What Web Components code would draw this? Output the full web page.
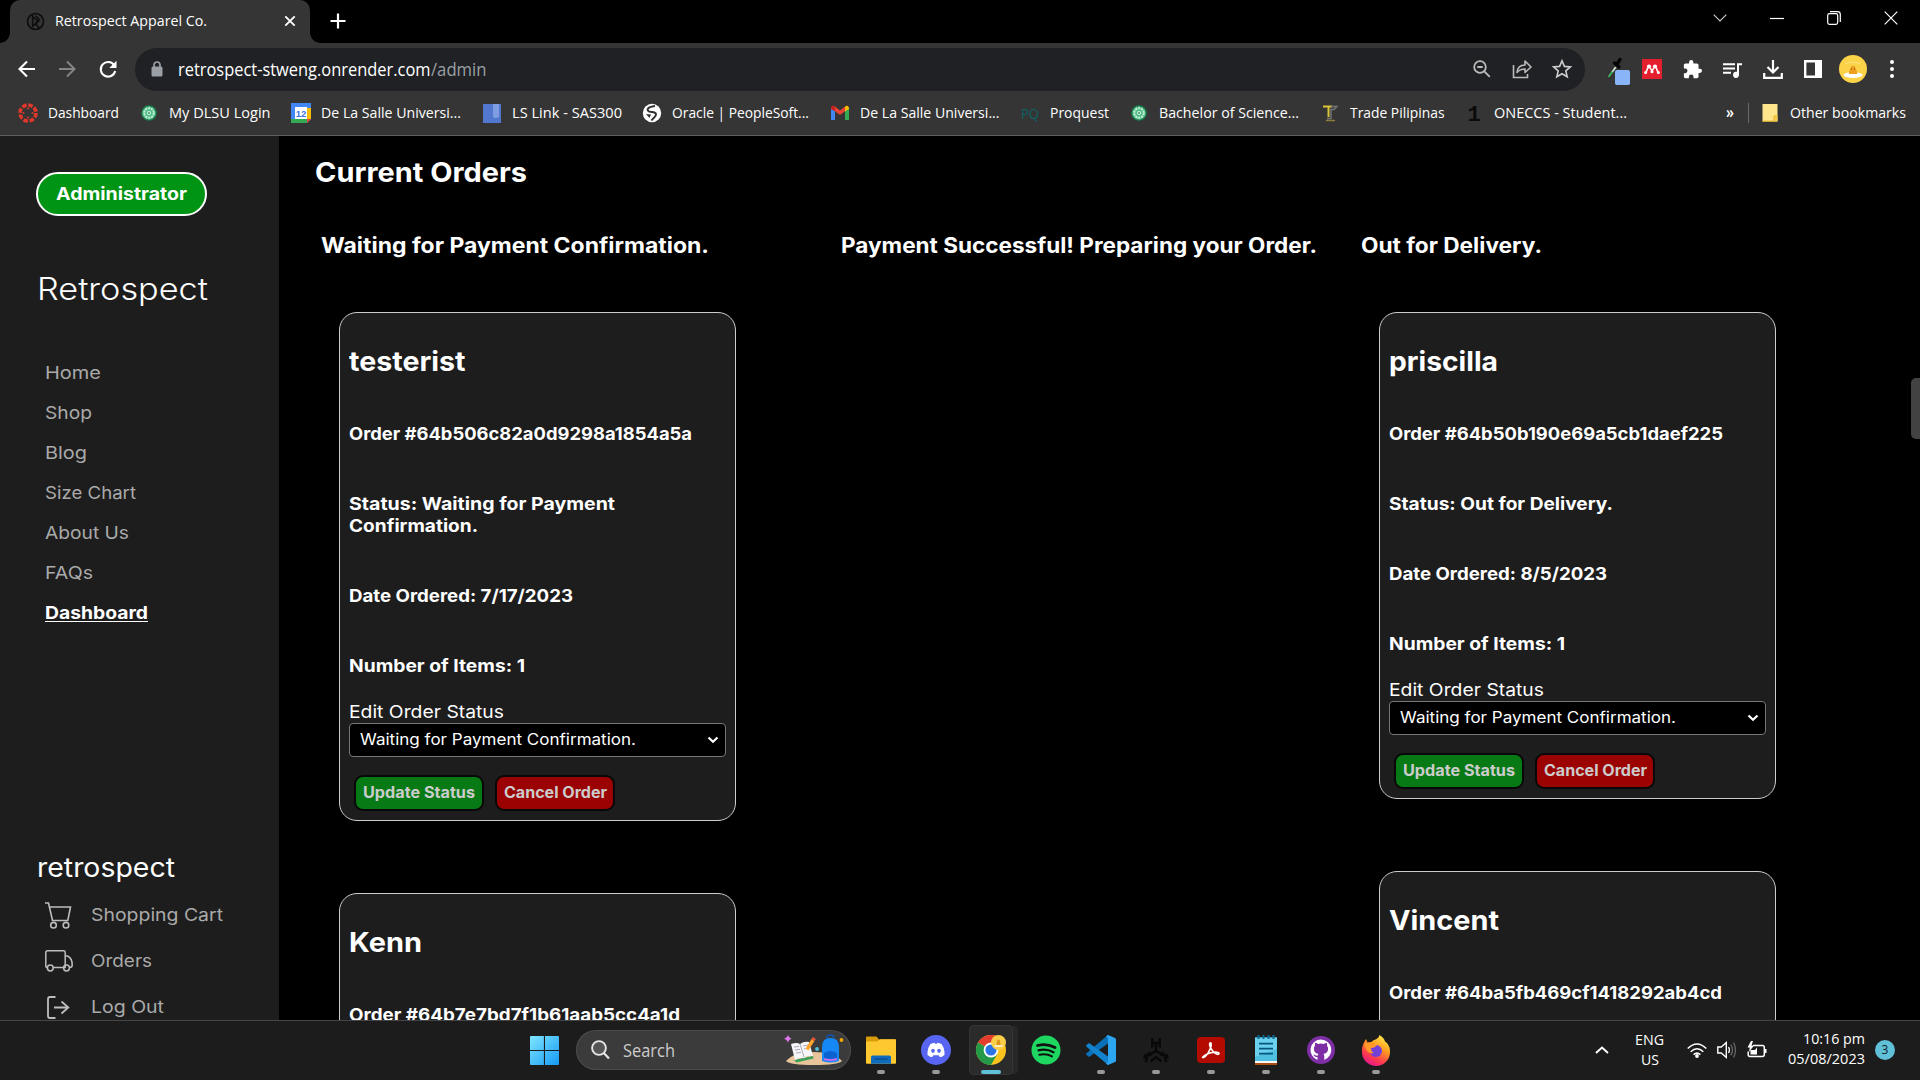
<!DOCTYPE html>
<html lang="en">
<head>
<meta charset="utf-8">
<title>Retrospect Apparel Co.</title>
<style>
html,body{margin:0;height:100%;background:#000;overflow:hidden}
body{font-family:Inter,"Liberation Sans",sans-serif;color:#fff}
</style>
</head>
<body>
<desktop-screen></desktop-screen>
<script>
const SEGOE = '"Open Sans","Noto Sans",sans-serif';
const define = (name, html, init) => customElements.define(name, class extends HTMLElement {
  connectedCallback() {
    if (this.shadowRoot) return;
    const t = document.createElement('template');
    t.innerHTML = typeof html === 'function' ? html(this) : html;
    this.attachShadow({mode: 'open'}).appendChild(t.content.cloneNode(true));
    if (init) init(this);
  }
});

const ICONS = {
  brand: ['0 0 20 20', '<g fill="none" stroke="#0c0c0c" stroke-width="1.7"><circle cx="10" cy="10" r="8.4"/><path d="M7 3v13M7 5l6 5-6 5M10 4l4 4-4 4 4 5"/></g>'],
  close: ['0 0 12 12', '<path d="M1.3 1.3l9.4 9.4M10.7 1.3L1.3 10.7" stroke="#fff" stroke-width="1.9" fill="none"/>'],
  plus: ['0 0 16 16', '<path d="M8 .5v15M.5 8h15" stroke="#fff" stroke-width="2.2"/>'],
  chev: ['0 0 14 8', '<path d="M.7.7L7 7 13.3.7" stroke="#ccc" stroke-width="1.1" fill="none"/>'],
  min: ['0 0 14 14', '<path d="M0 7.500h14" stroke="#fff" stroke-width="1.2"/>'],
  restore: ['0 0 14 14', '<g fill="none" stroke="#fff" stroke-width="1.2"><rect x=".7" y="2.700" width="10" height="10.600" rx="1.800"/><path d="M3 .7h7.500a2.800 2.800 0 0 1 2.800 2.800v7.500"/></g>'],
  winclose: ['0 0 14 14', '<path d="M.7.7l12.600 12.600M13.300.7L.7 13.300" stroke="#fff" stroke-width="1.200"/>'],
  back: ['0 0 18 18', '<path d="M17 9H2M9 1.500L1.500 9 9 16.500" fill="none" stroke="#fff" stroke-width="2.100"/>'],
  fwd: ['0 0 18 18', '<path d="M1 9h15M9 1.500L16.500 9 9 16.500" fill="none" stroke="#858585" stroke-width="2"/>'],
  reload: ['0 0 18 18', '<path d="M15.200 5.300A7.300 7.300 0 1 0 16.200 11" fill="none" stroke="#fff" stroke-width="2.100"/><path d="M17.500.8v7.200h-7.200z" fill="#fff"/>'],
  lock: ['0 0 12 16', '<rect x=".5" y="5.500" width="11" height="10" rx="1.500" fill="#9aa0a6"/><path d="M3 6V4a3 3 0 0 1 6 0v2" fill="none" stroke="#9aa0a6" stroke-width="1.700"/>'],
  zoomout: ['0 0 18 18', '<g fill="none" stroke="#bbb" stroke-width="1.800"><circle cx="7" cy="7" r="5.800"/><path d="M11.300 11.300l5.500 5.500M4.300 7h5.400"/></g>'],
  share: ['0 0 20 20', '<g fill="none" stroke="#bbb" stroke-width="1.600"><path d="M1.500 6v12.500h14V15"/><path d="M5 13.500c.5-5 3.500-7.500 8-7.500V2l6 6-6 5.500V10c-4 0-6 1-8 3.500z" stroke-linejoin="round"/></g>'],
  star: ['0 0 20 20', '<path d="M10 1.800l2.400 5.600 6 .5-4.600 4 1.400 5.900L10 14.700l-5.200 3.100 1.400-5.900-4.600-4 6-.5z" fill="none" stroke="#ccc" stroke-width="1.600"/>'],
  dropper: ['0 0 24 30', '<path d="M2 19L9 9l2 1.500L4.500 19 2 21z" fill="#d7e8d9" stroke="#222" stroke-width=".7"/><path d="M2 20l3.500-5.500 1.500.5-3.500 5z" fill="#20b048"/><path d="M8.500 6l4.500 4M10.500 8L14 2.500" stroke="#050505" stroke-width="3.300" stroke-linecap="round"/><rect x="9" y="13" width="15" height="15" rx="1.800" fill="#8ab4f8"/>'],
  mendeley: ['0 0 20 20', '<rect width="20" height="20" fill="#e5202e"/><g fill="#fff"><circle cx="7" cy="7.600" r="2.100"/><circle cx="13" cy="7.600" r="2.100"/><circle cx="3.600" cy="13.500" r="1.500"/><circle cx="10" cy="12.800" r="1.500"/><circle cx="16.400" cy="13.500" r="1.500"/></g><path d="M3.600 13.300Q5 12.500 5.600 9M8.400 9l1.600 3.500L11.600 9M14.400 9q.6 3.500 2 4.300" fill="none" stroke="#fff" stroke-width="1.500"/>'],
  puzzle: ['1 1 22 22', '<path fill="#fff" d="M20.500 11H19V7c0-1.100-.9-2-2-2h-4V3.500a2.500 2.500 0 0 0-5 0V5H4c-1.100 0-2 .9-2 2v3.800h1.500a2.700 2.700 0 0 1 0 5.400H2V20c0 1.100.9 2 2 2h3.800v-1.500a2.700 2.700 0 0 1 5.400 0V22H17c1.100 0 2-.9 2-2v-4h1.500a2.500 2.500 0 0 0 0-5z"/>'],
  queue: ['2 4 20 16', '<path fill="#fff" d="M15 6H3v2h12V6zm0 4H3v2h12v-2zM3 16h8v-2H3v2zM17 6v8.200a3 3 0 1 0 2 2.800V8h3V6h-5z"/>'],
  download: ['0 0 20 20', '<path d="M10 1v12M4.500 8l5.500 5.500L15.500 8M1.200 14v4.800h17.600V14" fill="none" stroke="#fff" stroke-width="2.200"/>'],
  panel: ['0 0 18 18', '<path d="M1.200 1.200h15.600v15.600H1.200z" fill="none" stroke="#fff" stroke-width="2.400"/><path d="M11 1h6v16h-6z" fill="#fff"/>'],
  avatar: ['0 0 28 28', '<circle cx="14" cy="14" r="14" fill="#fbd348"/><path d="M7 8.500q7-2.500 14 0" stroke="#fff2b8" fill="none" stroke-dasharray="1.500 1"/><ellipse cx="14" cy="20" rx="9.500" ry="3" fill="#fff"/><path d="M10 19c-.5-3 1-4 1.500-6 .8-3 4.500-3 5 0 .5 2 2 3 1.800 6z" fill="#f0a020"/><path d="M12 14h1M15 14h1" stroke="#803c00"/>'],
  dots: ['0 0 4 18', '<g fill="#fff"><circle cx="2" cy="2" r="2"/><circle cx="2" cy="9" r="2"/><circle cx="2" cy="16" r="2"/></g>'],
  canvas: ['0 0 20 20', '<circle cx="10" cy="10" r="8" fill="none" stroke="#e2372b" stroke-width="3.600" stroke-dasharray="4.600 1.683"/><g fill="#e2372b"><circle cx="10" cy="5.500" r="1"/><circle cx="10" cy="14.500" r="1"/><circle cx="5.500" cy="10" r="1"/><circle cx="14.500" cy="10" r="1"/></g>'],
  dlsu: ['0 0 20 20', '<circle cx="10" cy="10" r="7.200" fill="#4fbb86" stroke="#167848" stroke-width="1.500" stroke-dasharray="2.500 1"/><circle cx="10" cy="10" r="4.800" fill="none" stroke="#c2eed6" stroke-width="2" stroke-dasharray="2.200 .8"/><circle cx="10" cy="10" r="2" fill="#d6f5e4"/><circle cx="10" cy="10" r=".9" fill="#2b8a5a"/>'],
  gcal: ['0 0 20 20', '<path d="M0 0h20v16l-4 4H0z" fill="#4285f4"/><path d="M16 5h4v11h-4z" fill="#fbbc04"/><path d="M0 16h16v4H0z" fill="#34a853"/><path d="M16 16h4l-4 4z" fill="#ea4335"/><path d="M4 4h12v12H4z" fill="#fff"/><text x="10" y="13.500" font-family="Liberation Sans" font-weight="700" font-size="9.500" text-anchor="middle" fill="#3a74e0">12</text>'],
  lslink: ['0 0 20 20', '<path d="M1 1h18v19H1z" fill="#5277cf"/><path d="M11 1h6v13q-4 2-6 0z" fill="#7f9de2"/>'],
  oracle: ['0 0 20 20', '<circle cx="10" cy="10" r="9.200" fill="#fff"/><path d="M13 3C8 3.500 4.500 5.500 6 7.700s7.500.3 8 3.300-3 3.500-4.500 6.500" fill="none" stroke="#303030" stroke-width="2"/><path d="M4 11l5 .5-1.500 3.500z" fill="#303030"/>'],
  gmail: ['0 0 20 20', '<path d="M1 5v12h4V8z" fill="#4285f4"/><path d="M19 5v12h-4V8z" fill="#34a853"/><path d="M1 5.500V4.500q1.500-3 4-1l5 4 5-4v4.800L10 12 5 8.300z" fill="#ea4335"/><path d="M1 5q0-2.500 2.500-2.200L5 4v4.300L1 6z" fill="#c5221f"/><path d="M15 3.800q2.500-2.500 4 .7V6l-4 2.600z" fill="#fbbc04"/>'],
  pq: ['0 0 20 20', '<text x="10" y="15.500" font-family="Open Sans" font-size="15" text-anchor="middle" textLength="18" lengthAdjust="spacingAndGlyphs" fill="#0b6468">PQ</text>'],
  trade: ['0 0 20 20', '<path d="M3 3.500h9M8.500 4v10" stroke="#d8c438" stroke-width="2" fill="none"/><path d="M11 3.500h6l-3 3h-3v9H7" stroke="#777" stroke-width="1.400" fill="none"/><path d="M6 17.500h9" stroke="#8d7c3a" stroke-width="1.500"/>'],
  one: ['0 0 20 20', '<text x="10" y="18" font-family="Liberation Mono" font-weight="700" font-size="22" text-anchor="middle" fill="#0b0b0b">1</text>'],
  folder: ['0 0 16 18', '<path d="M.5 0h15v17.500H.5z" fill="#ffe58c"/><path d="M12 11.500h3.500v6H12z" fill="#f6cf51"/><path d="M.5 17.200h11.500v-5h3.500" stroke="#e8b520" fill="none"/>'],
  cart: ['0 0 26 27', '<g fill="none" stroke="#bdbdbd" stroke-width="1.600"><path d="M0 1h3.500l4 17.500h15.300L25.500 5H4.400"/><circle cx="8.500" cy="23.200" r="2.800"/><circle cx="21" cy="23.200" r="2.800"/></g>'],
  truck: ['0 0 28 22', '<g fill="none" stroke="#bdbdbd" stroke-width="1.500"><path d="M2.500 17.500Q.8 17.500.8 16V2.500Q.8.8 2.500.8h16q1.700 0 1.700 1.700v15H8M20 6h2.500Q27.200 8 27.200 15q0 2.500-2.500 2.500"/><circle cx="5.300" cy="18" r="2.900"/><circle cx="21.500" cy="18" r="2.900"/></g>'],
  logout: ['0 0 23 23', '<path d="M8.500 1H3Q1 1 1 3v17q0 2 2 2h5.500M7 11.500h14.500M14.500 5.500l6.800 6-6.800 6" fill="none" stroke="#bdbdbd" stroke-width="1.800"/>'],
  select: ['0 0 12 8', '<path d="M1.500 1.500L6 5.800l4.500-4.300" fill="none" stroke="#fff" stroke-width="2.200"/>'],
  windows: ['0 0 29 29', '<defs><linearGradient id="g" x2="1" y2="1"><stop stop-color="#7fe6ff"/><stop offset="1" stop-color="#159af4"/></linearGradient></defs><path d="M0 1q0-1 1-1h12.900v14H0zM15 0h13q1 0 1 1v13H15zM0 15h13.900v14H1q-1 0-1-1zM15 15h14v13q0 1-1 1H15z" fill="url(#g)"/>'],
  search: ['0 0 19 20', '<circle cx="8" cy="8" r="6.900" fill="#555" stroke="#e5e5e5" stroke-width="1.900"/><path d="M12.800 13l5.200 5.500" stroke="#e5e5e5" stroke-width="2.200"/>'],
  school: ['0 0 60 30', '<path d="M2 26q8-9 28-9t28 9q-4 4-28 4T2 26z" fill="#e9c49a"/><path d="M4 0q.6 3 3.500 3.800Q4.600 4.500 4 7.500 3 4.500.2 3.800 3.200 3 4 0z" fill="#e078f0"/><circle cx="57.500" cy="5" r="1.900" fill="#f3a800"/><circle cx="33" cy="14" r="1.900" fill="#4fc3d8"/><path d="M10 25l19-4 .5 2.500-17 4z" fill="#3aa05a"/><path d="M7 9q6-2 9 0 4-3 9-2l4 14q-6-1-9 2-4-1-9 2z" fill="#f6f6fa"/><path d="M16 9l4 13M10 12l5-.6M11 15l5-.6M12 18l5-.6M19 11l5-1M20 14l5-1" stroke="#a9a9b8" fill="none"/><path d="M23 14.500l6-9.500" stroke="#ffa52c" stroke-width="3.400"/><path d="M29 5l1.300-2" stroke="#f4523c" stroke-width="3.600"/><path d="M38 26V12q0-9 8.500-9T55 12v14q-8 3-17 0z" fill="#1588f5"/><path d="M43 3q0-3 3.500-3T50 3" stroke="#0d55b0" fill="none" stroke-width="1.600"/><path d="M40 18q6-4 13 0v6q-6 2-13 0z" fill="#0b62d0"/><path d="M40 24q6 2 13 0" stroke="#c46cf0" stroke-width="2" fill="none"/>'],
  explorer: ['0 0 30 28', '<path d="M0 1.500Q0 .5 1 .5h9.500l2.500 3H30V14H0z" fill="#d99b08"/><path d="M0 5.500h11l3-2.300h15q1 0 1 1V27q0 .8-1 .8H1q-1 0-1-.8z" fill="#fdc92f"/><path d="M5 27.800V21q0-1.500 1.500-1.500h17Q25 19.500 25 21v6.800z" fill="#0f6cbd"/><path d="M8.500 23h13" stroke="#0a4a86" stroke-width="1.300"/>'],
  discord: ['0 0 30 30', '<circle cx="15" cy="15" r="15" fill="#5865f2"/><path d="M9.500 9q2-1 4-1.200l.5 1h2l.5-1q2 .2 4 1.200 3.500 5 3 11-2 1.700-4.500 2.200l-1.300-2h-5.400l-1.300 2Q8.500 21.700 6.500 20q-.5-6 3-11z" fill="#fff"/><ellipse cx="12" cy="15.800" rx="1.800" ry="2.100" fill="#5865f2"/><ellipse cx="18" cy="15.800" rx="1.800" ry="2.100" fill="#5865f2"/>'],
  chrome: ['0 0 30 30', '<circle cx="15" cy="15" r="15" fill="#fcc31e"/><path d="M15 15L2 7.500A15 15 0 0 1 28 7.500H15z" fill="#e33b2e"/><path d="M2 7.500A15 15 0 0 0 15 30l6.500-11.300L15 15z" fill="#249a49"/><circle cx="15" cy="15" r="7.400" fill="#fff"/><circle cx="15" cy="15" r="5.600" fill="#2b74e8"/><circle cx="22.500" cy="7.500" r="7.500" fill="#fbce47"/><path d="M20.500 10.500q0-6 2-6t2 6z" fill="#dd941a"/><path d="M18.500 11h8" stroke="#fff6d0" stroke-width="1.700"/>'],
  spotify: ['0 0 30 30', '<circle cx="15" cy="15" r="14.500" fill="#1ed760"/><g fill="none" stroke="#111" stroke-linecap="round"><path d="M6.500 10.500q9-2.500 17.500 2" stroke-width="2.800"/><path d="M7.500 15.300q8-2 15 1.900" stroke-width="2.300"/><path d="M8.300 19.800q7-1.600 12.700 1.600" stroke-width="1.900"/></g>'],
  vscode: ['0 0 30 30', '<path d="M22 0v8.500L3 22l-2.500-2q-.7-.8 0-1.700z" fill="#0a70b8"/><path d="M22 30v-8.500L3 8 .5 10q-.7.800 0 1.700z" fill="#1283cc"/><path d="M22 0l7 3q1 .5 1 1.500v21q0 1-1 1.500l-7 3-2-1.500 2-1.500V3l-2-1.500z" fill="#2da6f2"/>'],
  tool: ['0 0 30 26', '<g fill="none" stroke="#080808" stroke-width="2.400"><path d="M11.200 1v9.500M18.800 1v9.500M11.200 6h7.600M15 6v8.500M15 14L2.500 21M15 14l12.500 7M7.500 15l1.500 3-6 .5M4.500 25l2-5M22.500 15L21 18l6 .5M25.500 25l-2-5M9.500 24.500L15 20l5.500 4.500"/></g>'],
  acrobat: ['0 0 28 26', '<rect width="28" height="26" rx="4" fill="#b30b00"/><path d="M6.500 20.500c3-1 6.500-7 7.500-11 .6-3-.3-4.500-1-3.500-1.500 2.500 2.500 9.500 6.500 11 2.500 1 3.500-.8 1.500-1.600-3-1-9 .5-12.500 2.600-2.500 1.500-4 3-2 2.500z" fill="none" stroke="#fff" stroke-width="1.600"/>'],
  notepad: ['0 0 22 30', '<path d="M0 2.500h22V29H0z" fill="#4fbfe0"/><path d="M0 2.500h22V14L0 22z" fill="#6bd0ec"/><path d="M0 26h22v2H0z" fill="#f5f5f5"/><path d="M0 28h22v2H0z" fill="#a74c12"/><path d="M4 8.700h14M4 13.700h14M4 18.700h14" stroke="#05557f" stroke-width="1.700"/><path d="M3.500 0v4M8.500 0v4M13.500 0v4M18.500 0v4" stroke="#0b6a96" stroke-width="2"/>'],
  github: ['0 0 30 30', '<circle cx="15" cy="15" r="14" fill="#7f2fa5"/><path d="M15 5.500a9.700 9.700 0 0 0-3.200 18.800c.7.100.9-.3.900-.7v-2.200c-2.900.6-3.500-1.200-4.300-2.100 2 .2 2 1.500 4.400 1 .1-.6.500-1 .8-1.300-3.600-.8-4.800-2.900-4.800-5.300 0-1.200.4-2.200 1.100-3-.1-.7-.2-1.800.2-2.800 1 0 2 .5 2.800 1.100a9 9 0 0 1 4.300 0c.8-.6 1.900-1.100 2.800-1.100.4 1 .3 2.100.2 2.800.7.800 1.100 1.800 1.100 3 0 2.400-1.200 4.500-4.800 5.300.5.400.8 1.200.8 2.100v2.500c0 .4.200.8.900.7A9.700 9.700 0 0 0 15 5.500z" fill="#7f2fa5"/><path d="M15 4.500a10.500 10.500 0 0 0-3.500 20.400v-3c-3 .5-3.600-1.300-4.200-2.300 2 0 2.300 1.700 4.400 1 .1-.7.500-1.200.9-1.500-3.400-.8-4.700-2.700-4.700-5.400 0-1.200.4-2.200 1.100-3-.2-.8-.2-2 .3-3 1 .1 2 .6 2.800 1.200a10 10 0 0 1 5.800 0c.8-.6 1.800-1.100 2.800-1.200.5 1 .5 2.200.3 3 .7.800 1.100 1.800 1.100 3 0 2.700-1.300 4.600-4.700 5.400.6.500.9 1.300.9 2.300v3.500A10.500 10.500 0 0 0 15 4.500z" fill="#fff"/>'],
  firefox: ['0 0 30 30', '<defs><linearGradient id="f" x1=".8" x2=".3" y2="1"><stop stop-color="#fff44f"/><stop offset=".4" stop-color="#ff9a1f"/><stop offset=".75" stop-color="#ff3850"/><stop offset="1" stop-color="#e01890"/></linearGradient></defs><path d="M18.500 0c3 2 5 4 5.500 6.500 3 2 5.500 6 5 11A14 14 0 0 1 1 16.500C.8 11 3 7.500 5 4l1.500 3.500 4-.5C13 4 17.500 5 18.500 0z" fill="url(#f)"/><circle cx="15" cy="16" r="6" fill="#7340d8"/><path d="M3 9q6-3 9 0l4 1q-2 3-6 3 0 4 3 5-6 1-8-4z" fill="#ff9a2a"/>'],
  caret: ['0 0 14 8', '<path d="M1 7l6-5.500L13 7" fill="none" stroke="#fff" stroke-width="1.900"/>'],
  wifi: ['0 0 20 15', '<g fill="none" stroke="#fff" stroke-width="1.500"><path d="M.7 5.500q9.300-9 18.600 0M3.700 8.700q6.300-6 12.600 0M6.600 11.600q3.400-3 6.800 0"/></g><circle cx="10" cy="13" r="1.900" fill="#fff"/>'],
  sound: ['0 0 20 18', '<path d="M.8 6h3.500l5-4.500v15L4.300 12H.8z" fill="none" stroke="#fff" stroke-width="1.400"/><path d="M11.500 6q2 3 0 6" fill="none" stroke="#fff" stroke-width="1.300"/><path d="M13.800 3.700q3.500 5.300 0 10.600M16.500 1.500q4 7.500 0 15" fill="none" stroke="#666" stroke-width="1.300"/>'],
  battery: ['0 0 20 18', '<path d="M6 4.500h9.500Q17.300 4.500 17.300 6.500v7q0 2-1.800 2H3q-1.800 0-1.800-2v-3" fill="none" stroke="#fff" stroke-width="1.500"/><path d="M18 8h1.500v4H18zM3.500 9H8l2-2.500v7h-6.500zM4 0L.5 6.500h2.300L2 11l5-6.500H4.500L6 0z" fill="#fff"/>']
};

define('ui-icon', el => {
  const [box, art] = ICONS[el.getAttribute('name')];
  const [w, h] = box.split(' ').slice(2);
  const W = el.getAttribute('w') || w, H = el.getAttribute('h') || h;
  return `<style>:host{display:block;flex:none;width:${W}px;height:${H}px}svg{display:block;overflow:visible}</style>
  <svg width="${W}" height="${H}" viewBox="${box}" preserveAspectRatio="none">${art}</svg>`;
});

define('bookmark-link', el => `<style>:host{display:flex;align-items:center;gap:10px;flex:none}fit-text{margin-bottom:2px}</style>
  <ui-icon name="${el.getAttribute('icon')}" w="20" h="20"></ui-icon><fit-text w="${el.getAttribute('w')}"><slot></slot></fit-text>`);

define('browser-chrome', `<style>
  :host{display:block;height:136px;background:#353535;font:15px/20px ${SEGOE};color:#fff;box-sizing:border-box;border-bottom:1px solid #5d5e60}
  .row{display:flex;align-items:center}
  .tabs{height:43px;background:#000;padding-left:10px;box-sizing:border-box}
  .tab{width:300px;height:43px;background:#353535;border-radius:10px 10px 0 0;padding:0 14px 1px 16px;box-sizing:border-box;position:relative}
  .tab::before,.tab::after{content:"";position:absolute;bottom:0;width:10px;height:10px}
  .tab::before{left:-10px;background:radial-gradient(circle at 0 0,#000 9.5px,#353535 10px)}
  .tab::after{right:-10px;background:radial-gradient(circle at 100% 0,#000 9.5px,#353535 10px)}
  .tab fit-text{margin:0 0 2px 10px}.tab .x{margin-left:77px}
  .grow{flex:1}
  .win{gap:43px;padding:0 22px 7px 0}
  .tools{height:52px;padding:0 26px 0 18px}
  .omni{flex:none;width:1450px;height:43px;border-radius:22px;background:#202124;margin-left:18px;padding:0 13px 0 16px;box-sizing:border-box;font-size:17.5px}
  .dim{color:#9aa0a6}
  .marks{height:36px;padding-left:18px;gap:20.45px}
  .rest{margin-left:78px;gap:12px}
  .rule{width:1px;height:20px;background:#6a6a6a;margin-left:2px}
  </style>
  <div class="row tabs"><div class="row tab"><ui-icon name="brand" w="19" h="19"></ui-icon><fit-text w="152">Retrospect Apparel Co.</fit-text><ui-icon class="x" name="close" w="12" h="12"></ui-icon></div>
   <ui-icon name="plus" style="margin-left:19.5px;margin-bottom:1px"></ui-icon><div class="grow"></div>
   <div class="row win"><ui-icon name="chev"></ui-icon><ui-icon name="min"></ui-icon><ui-icon name="restore"></ui-icon><ui-icon name="winclose"></ui-icon></div></div>
  <div class="row tools"><ui-icon name="back"></ui-icon><ui-icon name="fwd" style="margin-left:22px"></ui-icon><ui-icon name="reload" style="margin-left:23px"></ui-icon>
   <div class="row omni"><ui-icon name="lock"></ui-icon><fit-text w="252.5" style="margin-left:15px">retrospect-stweng.onrender.com</fit-text><fit-text class="dim" w="55.5">/admin</fit-text><div class="grow"></div><ui-icon name="zoomout"></ui-icon><ui-icon name="share" style="margin-left:21px"></ui-icon><ui-icon name="star" style="margin-left:20px"></ui-icon></div>
   <ui-icon name="dropper" style="margin-left:21px;margin-top:5px"></ui-icon><ui-icon name="mendeley" style="margin-left:12px"></ui-icon><ui-icon name="puzzle" w="19" h="19" style="margin-left:21px"></ui-icon><ui-icon name="queue" w="20" h="17" style="margin-left:20px"></ui-icon><ui-icon name="download" style="margin-left:21px"></ui-icon><ui-icon name="panel" style="margin-left:21px"></ui-icon><ui-icon name="avatar" style="margin-left:17px"></ui-icon><ui-icon name="dots" style="margin-left:23px"></ui-icon></div>
  <div class="row marks">
   <bookmark-link icon="canvas" w="71">Dashboard</bookmark-link><bookmark-link icon="dlsu" w="101.5">My DLSU Login</bookmark-link><bookmark-link icon="gcal" w="140">De La Salle Universi...</bookmark-link><bookmark-link icon="lslink" w="110">LS Link - SAS300</bookmark-link><bookmark-link icon="oracle" w="137">Oracle | PeopleSoft...</bookmark-link><bookmark-link icon="gmail" w="139.5">De La Salle Universi...</bookmark-link><bookmark-link icon="pq" w="59">Proquest</bookmark-link><bookmark-link icon="dlsu" w="140">Bachelor of Science...</bookmark-link><bookmark-link icon="trade" w="94.500">Trade Pilipinas</bookmark-link><bookmark-link icon="one" w="133">ONECCS - Student...</bookmark-link>
   <div class="row rest"><fit-text w="8" style="font-size:17px;font-weight:600;padding-bottom:3px">»</fit-text><span class="rule"></span><ui-icon name="folder" style="margin-left:1px"></ui-icon><fit-text w="116" style="margin-bottom:2px">Other bookmarks</fit-text></div>
  </div>`);

define('nav-item', el => `<style>:host{display:block;height:40px;color:#aaa;font-size:17.5px;line-height:22px}
  :host([active]){color:#fff;font-weight:700}
  :host([active]) fit-text{text-decoration:underline;text-decoration-thickness:1px;text-underline-offset:2px}</style>
  <fit-text w="${el.getAttribute('w')}"><slot></slot></fit-text>`);

define('account-item', el => `<style>:host{display:flex;align-items:center;height:46px;color:#aaa;font-size:17.5px;line-height:22px}.i{width:46px;flex:none;display:flex}</style>
  <div class="i"><ui-icon name="${el.getAttribute('icon')}" style="margin-left:${el.getAttribute('dx') || 0}px"></ui-icon></div><fit-text w="${el.getAttribute('w')}"><slot></slot></fit-text>`);

define('side-bar', `<style>
  :host{display:block;flex:none;width:279px;height:884px;background:#1d1d1d;box-sizing:border-box;padding:36px 0 0 36px;overflow:hidden}
  .badge{width:171px;height:44px;box-sizing:border-box;border:2px solid #fff;border-radius:22px;background:#009414;display:flex;align-items:center;justify-content:center;font-size:17.5px;font-weight:700;line-height:22px}
  .title{margin:53px 0 0 1px;font-size:30.500px;line-height:40px;font-weight:300}
  .nav{margin:53px 0 0 9px}
  .user{margin:208px 0 0 1px;font-size:26.500px;line-height:34px}
  .acc{margin:8px 0 0 9px}
  </style>
  <div class="badge"><fit-text w="131">Administrator</fit-text></div>
  <div class="title"><fit-text w="171">Retrospect</fit-text></div>
  <div class="nav"><nav-item w="56">Home</nav-item><nav-item w="47">Shop</nav-item><nav-item w="42">Blog</nav-item><nav-item w="91">Size Chart</nav-item><nav-item w="84">About Us</nav-item><nav-item w="48">FAQs</nav-item><nav-item w="103" active>Dashboard</nav-item></div>
  <div class="user"><fit-text w="138">retrospect</fit-text></div>
  <div class="acc"><account-item icon="cart" w="132">Shopping Cart</account-item><account-item icon="truck" w="61">Orders</account-item><account-item icon="logout" dx="2" w="73">Log Out</account-item></div>`);

/* With the "folded" attribute a card shows its heading rows only. */
define('order-card', el => {
  const a = n => el.getAttribute(n);
  const pair = s => { const [t, w] = s.split('~'); return `<fit-text w="${w}">${t}</fit-text>`; };
  const row = s => `<p>${pair(s)}</p>`;
  const rest = el.hasAttribute('folded') ? '' : `
  <section>${a('status').split('|').map(pair).join('')}</section>${row(a('date'))}
  <p class="last"><fit-text w="176">Number of Items: 1</fit-text></p>
  <div class="label"><fit-text w="155">Edit Order Status</fit-text></div>
  <div class="select"><fit-text w="276">Waiting for Payment Confirmation.</fit-text><ui-icon name="select"></ui-icon></div>
  <div class="btns"><div class="b g"><fit-text w="112">Update Status</fit-text></div><div class="b r"><fit-text w="103">Cancel Order</fit-text></div></div>`;
  return `<style>
  :host{display:block;width:397px;box-sizing:border-box;border:1px solid #ccc;border-radius:18px;background:#1d1d1d;padding:32px 9px 9px;font-size:17.500px;line-height:22px}
  :host([folded]){height:487px}
  h2{margin:0;font-size:27px;line-height:34px}
  p,section{margin:0 0 48px;font-weight:700}
  h2+p{margin-top:44px}
  .last{margin-bottom:24px}
  .label{height:22px}
  .select{display:flex;align-items:center;justify-content:space-between;height:34px;box-sizing:border-box;border:1px solid #767676;border-radius:4px;background:#000;padding:0 6px 0 9.5px;font-size:15.500px}
  .btns{display:flex;gap:11px;padding:18px 5px 0}
  .b{display:flex;align-items:center;justify-content:center;height:36px;box-sizing:border-box;border:2px solid #080808;border-radius:9px;color:#ccc;font-weight:700;font-size:15.500px}
  .g{width:130px;background:#077a15}.r{width:120px;background:#9b0303}
  </style>
  <h2><fit-text w="${a('nw')}">${a('name')}</fit-text></h2>
  ${row(a('order'))}${rest}`;
});

define('order-column', el => `<style>
  :host{display:block;flex:none;width:520px}
  h3{margin:0 0 53px;padding-left:6px;font-size:21px;line-height:26px}
  .cards{display:flex;flex-direction:column;gap:72px;padding-left:24px}</style>
  <h3><fit-text w="${el.getAttribute('w')}">${el.getAttribute('heading')}</fit-text></h3><div class="cards"><slot></slot></div>`);

define('orders-board', `<style>
  :host{display:block;flex:1;min-width:0;height:884px;overflow:hidden;background:#000;padding:20px 0 0 36px;box-sizing:border-box}
  h1{margin:0;font-size:27px;line-height:34px}
  .cols{display:flex;margin-top:43px}
  </style>
  <h1><fit-text w="212">Current Orders</fit-text></h1>
  <div class="cols">
   <order-column heading="Waiting for Payment Confirmation." w="388">
    <order-card name="testerist" nw="116.5" order="Order #64b506c82a0d9298a1854a5a~343" status="Status: Waiting for Payment~266|Confirmation.~129" date="Date Ordered: 7/17/2023~224"></order-card>
    <order-card folded name="Kenn" nw="73" order="Order #64b7e7bd7f1b61aab5cc4a1d~331"></order-card>
   </order-column>
   <order-column heading="Payment Successful! Preparing your Order." w="476"></order-column>
   <order-column heading="Out for Delivery." w="181">
    <order-card name="priscilla" nw="109" order="Order #64b50b190e69a5cb1daef225~334" status="Status: Out for Delivery.~224" date="Date Ordered: 8/5/2023~218"></order-card>
    <order-card folded name="Vincent" nw="110" order="Order #64ba5fb469cf1418292ab4cd~333"></order-card>
   </order-column>
  </div>`);

define('scroll-thumb', `<style>:host{display:block;position:absolute;right:0;top:242px;width:9px;height:61px;border-radius:5px 0 0 5px;background:#424242}</style>`);

define('task-app', el => `<style>
  :host{display:flex;flex:none;position:relative;width:44px;height:50px;margin-right:11px;align-items:center;justify-content:center;border-radius:5px;box-sizing:border-box}
  :host([on]){background:#2b2b2b;box-shadow:inset 0 0 0 1px #353535,6px 0 0 -1px #272727}
  :host([dot])::after,:host([on])::after{content:"";position:absolute;left:18px;bottom:1px;width:8px;height:4px;border-radius:2px;background:#999}
  :host([on])::after{left:12px;width:20px;background:#60c0d8}
  </style><ui-icon name="${el.getAttribute('icon')}"></ui-icon>`);

define('task-bar', `<style>
  :host{display:flex;align-items:center;height:60px;box-sizing:border-box;border-top:1px solid #454545;border-bottom:1px solid #1c1c1c;background:#1c1c1c;padding-left:530px;font:15px/20px ${SEGOE};color:#fff}
  .search{display:flex;align-items:center;flex:none;width:275px;height:40px;margin:0 8px 0 17px;border-radius:20px;background:#3b3b3b;box-shadow:inset 0 0 0 1px #4b4b4b;box-sizing:border-box;padding:0 7px 0 15px;font-size:17.500px;color:#ccc}
  .search fit-text{margin:0 auto 0 12.500px}
  .grow{flex:1}
  .stack{display:flex;flex-direction:column}
  .lang{align-items:center;margin:0 23px 2px 26px}
  .time{align-items:flex-end;margin:0 10px 4px 21px}
  .n{width:20px;height:20px;border-radius:50%;background:#60c0d8;color:#102026;font-size:12px;text-align:center;margin-right:25px}
  .tray{display:flex;gap:10px;align-items:center}
  </style>
  <ui-icon name="windows"></ui-icon>
  <div class="search"><ui-icon name="search"></ui-icon><fit-text w="52">Search</fit-text><ui-icon name="school"></ui-icon></div>
  <task-app icon="explorer" dot></task-app><task-app icon="discord" dot></task-app><task-app icon="chrome" on></task-app><task-app icon="spotify"></task-app><task-app icon="vscode" dot></task-app><task-app icon="tool" dot></task-app><task-app icon="acrobat" dot></task-app><task-app icon="notepad" dot></task-app><task-app icon="github" dot></task-app><task-app icon="firefox" dot></task-app>
  <div class="grow"></div><ui-icon name="caret"></ui-icon>
  <div class="stack lang"><fit-text w="29">ENG</fit-text><fit-text w="18">US</fit-text></div>
  <div class="tray"><ui-icon name="wifi"></ui-icon><ui-icon name="sound"></ui-icon><ui-icon name="battery"></ui-icon></div>
  <div class="stack time"><fit-text w="62">10:16 pm</fit-text><fit-text w="77">05/08/2023</fit-text></div><div class="n">3</div>`);

define('desktop-screen', `<style>:host{display:flex;flex-direction:column;width:1920px;height:1080px;overflow:hidden}
  .page{display:flex;height:884px;position:relative}</style>
  <browser-chrome></browser-chrome><div class="page"><side-bar></side-bar><orders-board></orders-board><scroll-thumb></scroll-thumb></div><task-bar></task-bar>`);

/* A line of text stretched or narrowed to an exact advance width. */
define('fit-text', el => `<style>:host{display:block;flex:none;width:${el.getAttribute('w')}px;white-space:nowrap}
  span{display:inline-block;transform-origin:0 50%;text-decoration:inherit;vertical-align:top}</style><span><slot></slot></span>`, el => {
  const s = el.shadowRoot.querySelector('span');
  const natural = s.getBoundingClientRect().width;
  if (natural) s.style.transform = `scaleX(${el.getAttribute('w') / natural})`;
});
</script>
</body>
</html>
